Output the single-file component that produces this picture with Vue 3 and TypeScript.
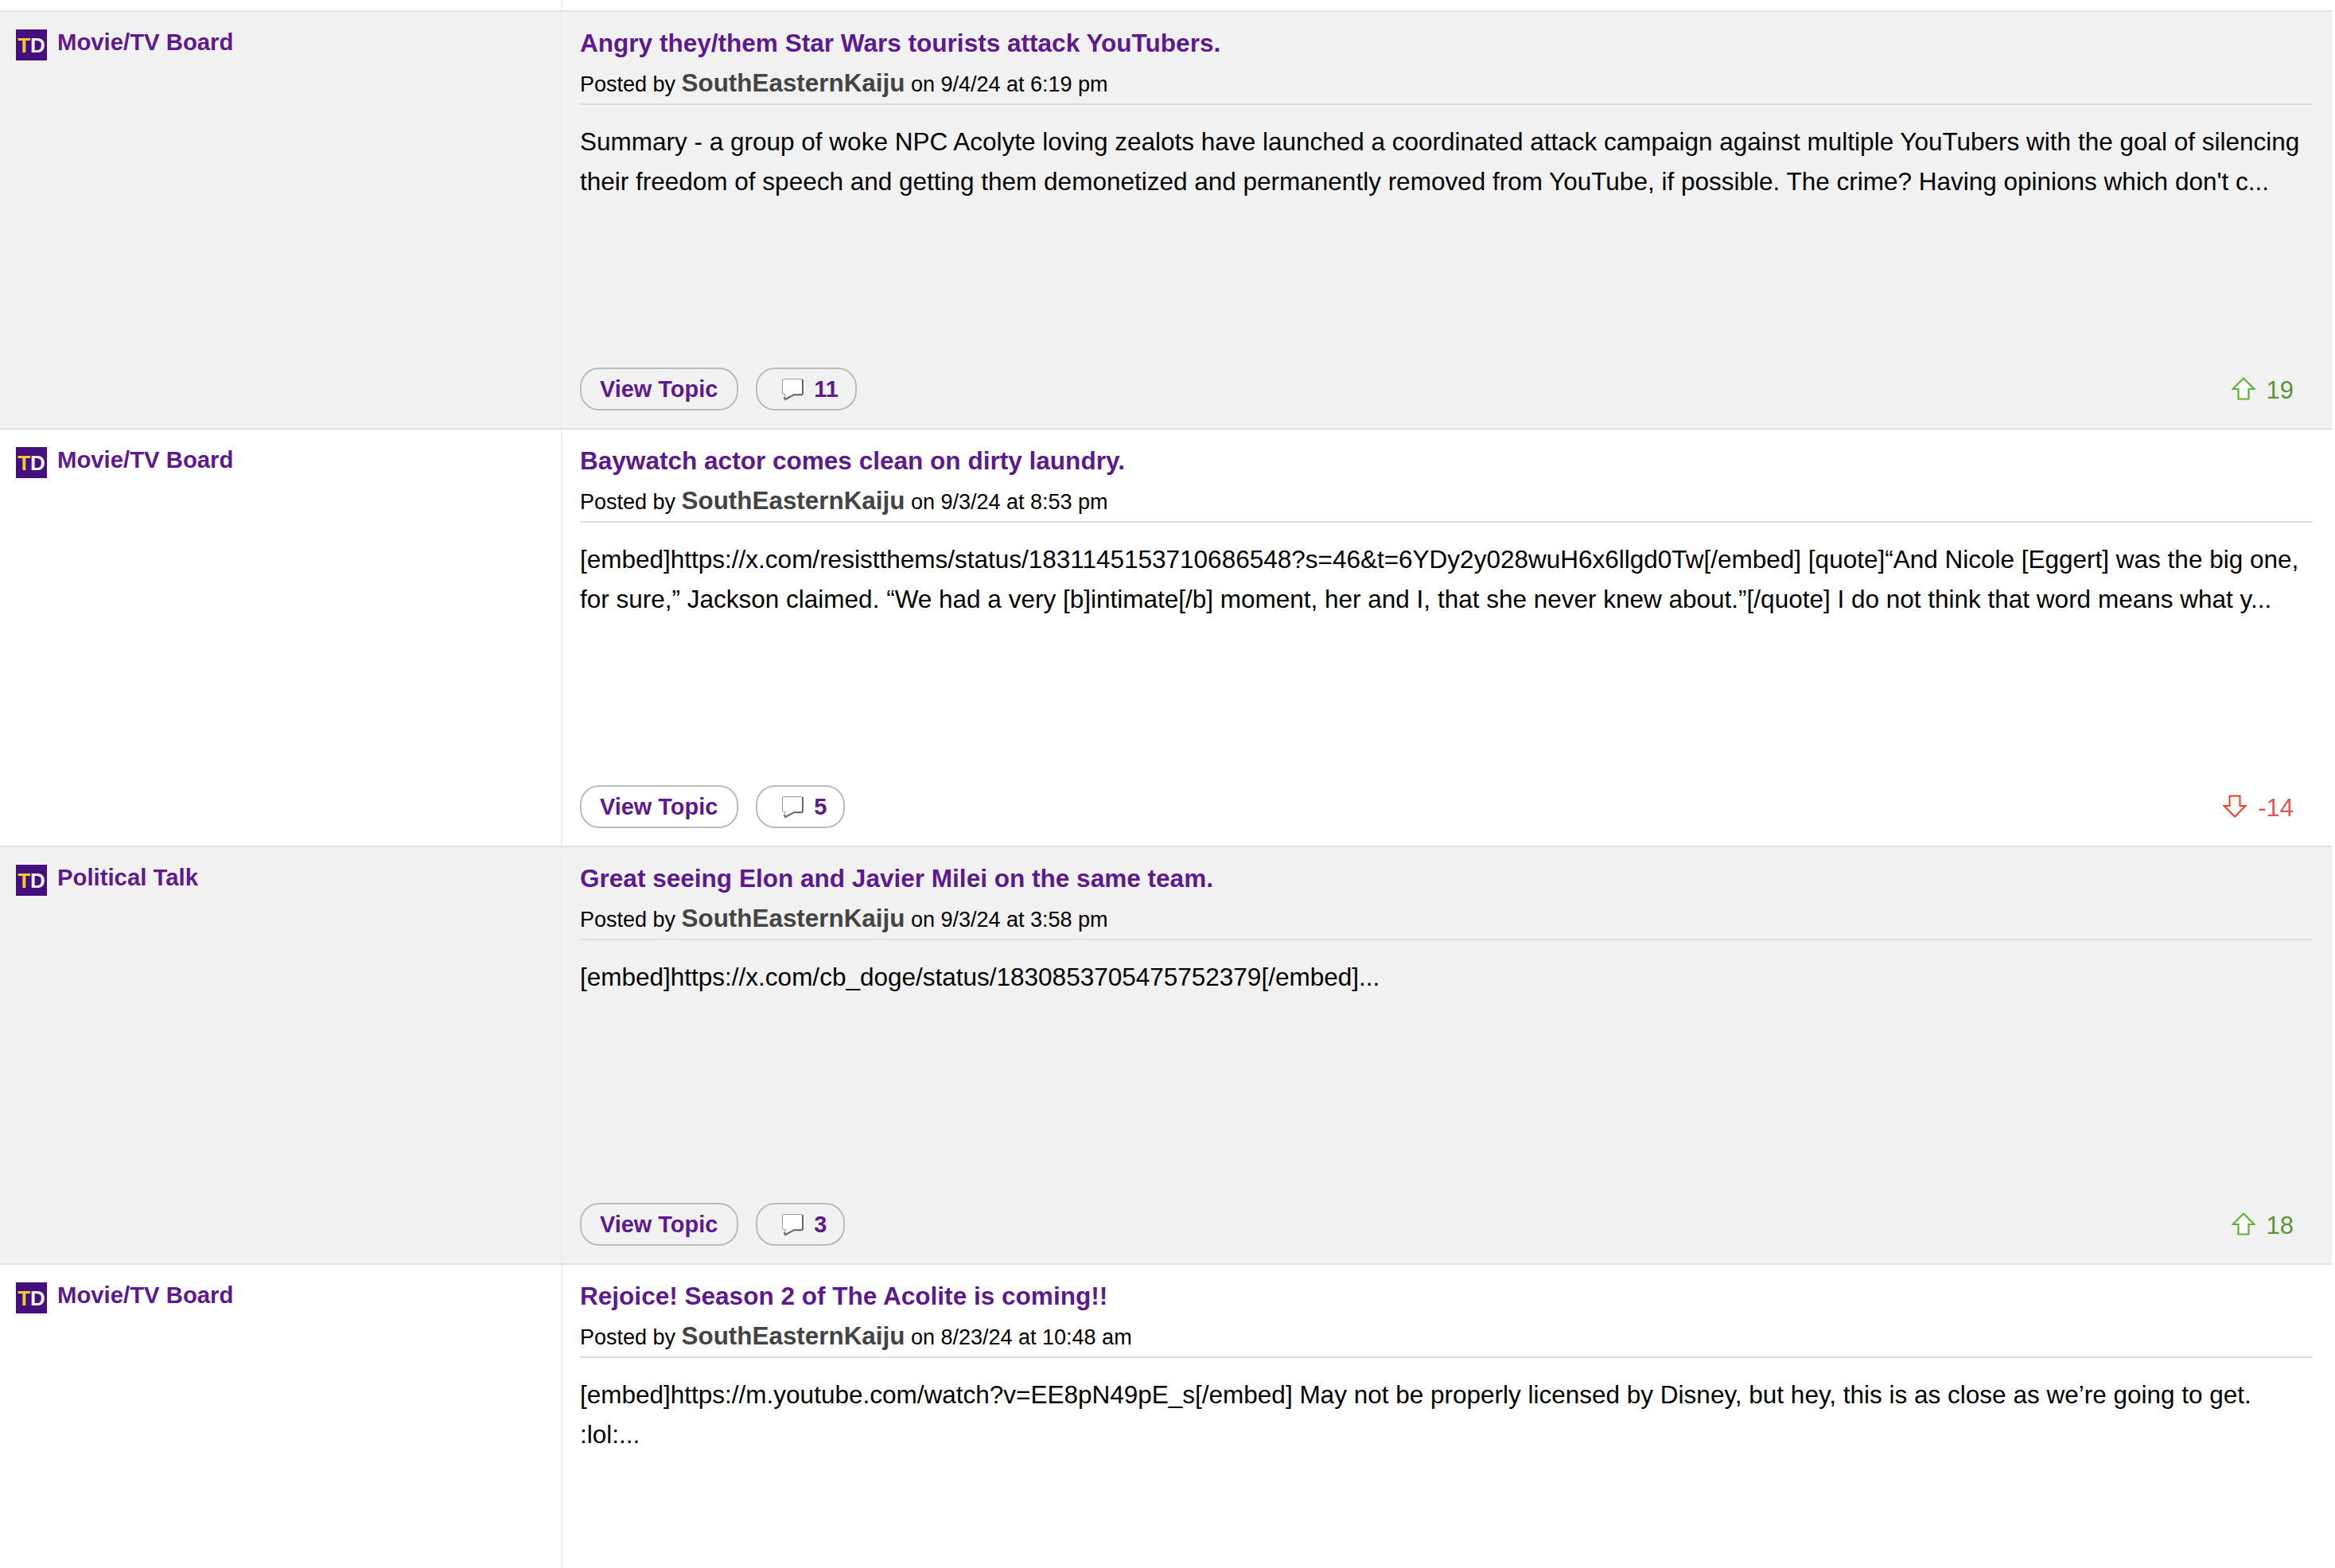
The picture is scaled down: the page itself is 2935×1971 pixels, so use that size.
<script setup lang="ts">
interface Post {
  board: string
  title: string
  date: string
  lines: string[]
  comments: number
  votes: number
}

const posts: Post[] = [
  {
    board: 'Movie/TV Board',
    title: 'Angry they/them Star Wars tourists attack YouTubers.',
    date: '9/4/24 at 6:19 pm',
    lines: [
      'Summary - a group of woke NPC Acolyte loving zealots have launched a coordinated attack campaign against multiple YouTubers with the goal of silencing',
      "their freedom of speech and getting them demonetized and permanently removed from YouTube, if possible. The crime? Having opinions which don't c...",
    ],
    comments: 11,
    votes: 19,
  },
  {
    board: 'Movie/TV Board',
    title: 'Baywatch actor comes clean on dirty laundry.',
    date: '9/3/24 at 8:53 pm',
    lines: [
      '[embed]https://x.com/resistthems/status/1831145153710686548?s=46&t=6YDy2y028wuH6x6llgd0Tw[/embed] [quote]“And Nicole [Eggert] was the big one,',
      'for sure,” Jackson claimed. “We had a very [b]intimate[/b] moment, her and I, that she never knew about.”[/quote] I do not think that word means what y...',
    ],
    comments: 5,
    votes: -14,
  },
  {
    board: 'Political Talk',
    title: 'Great seeing Elon and Javier Milei on the same team.',
    date: '9/3/24 at 3:58 pm',
    lines: ['[embed]https://x.com/cb_doge/status/1830853705475752379[/embed]...'],
    comments: 3,
    votes: 18,
  },
  {
    board: 'Movie/TV Board',
    title: 'Rejoice! Season 2 of The Acolite is coming!!',
    date: '8/23/24 at 10:48 am',
    lines: [
      '[embed]https://m.youtube.com/watch?v=EE8pN49pE_s[/embed] May not be properly licensed by Disney, but hey, this is as close as we’re going to get.',
      ':lol:...',
    ],
    comments: 0,
    votes: 0,
  },
]
</script>

<template>
  <div class="list">
    <div class="lead"><div class="lead-left"></div></div>
    <article v-for="(post, i) in posts" :key="post.title" class="row" :class="{ shaded: i % 2 === 0 }">
      <div class="side">
        <span class="logo"><span class="t">T</span><span class="d">D</span></span>
        <a class="board">{{ post.board }}</a>
      </div>
      <div class="main">
        <a class="title">{{ post.title }}</a>
        <div class="meta">Posted by <b class="user">SouthEasternKaiju</b> on {{ post.date }}</div>
        <div class="body">
          <div v-for="line in post.lines" :key="line" class="line">{{ line }}</div>
        </div>
        <div v-if="post.comments" class="foot">
          <a class="pill view">View Topic</a>
          <a class="pill count">
            <svg class="bubble" width="30" height="30" viewBox="0 0 30 30">
              <path d="M3.500 4 Q3.500 2.500 5 2.500 H27 Q28.500 2.500 28.500 4 V20 Q28.500 21.500 27 21.500 H18 L7 27 V21.500 H5 Q3.500 21.500 3.500 20 Z" fill="#fff" stroke="#999" stroke-width="1" />
              <path d="M29 3 V20.500 Q29 22.300 27 22.300 H18.300 L7 28.300 L5.500 25" fill="none" stroke="#444" stroke-width="1.800" stroke-opacity="0.8" />
            </svg>
            <span>{{ post.comments }}</span>
          </a>
          <div class="votes" :class="post.votes < 0 ? 'down' : 'up'">
            <svg v-if="post.votes >= 0" class="arrow" width="30" height="29" viewBox="0 0 30 29">
              <path d="M15 1.500 L28.500 15 H21.500 V27.500 H8.500 V15 H1.500 Z" fill="#fff" stroke="#5cb23c" stroke-width="2.200" />
            </svg>
            <svg v-else class="arrow" width="30" height="29" viewBox="0 0 30 29">
              <path d="M15 27.500 L1.500 14 H8.500 V1.500 H21.500 V14 H28.500 Z" fill="#fff" stroke="#ef3e1e" stroke-width="2" />
            </svg>
            <span class="num">{{ post.votes }}</span>
          </div>
        </div>
      </div>
    </article>
  </div>
</template>

<style>
html, body { margin: 0; background: #fff; overflow: hidden; }
</style>

<style scoped>
.list {
  width: 2931px;
  font-family: "Liberation Sans", Arial, sans-serif;
  color: #000;
}
.lead { height: 13px; }
.lead-left { width: 705px; height: 100%; border-right: 2px solid #eee; }
.row {
  display: flex;
  height: 525px;
  box-sizing: border-box;
  border-top: 2px solid #e0e0e0;
  background: #fff;
}
.row.shaded { background: #f1f1f1; }
.side {
  flex: none;
  box-sizing: border-box;
  padding: 22px 0 0 20px;
  border-right: 2px solid #eee;
  width: 707px;
  display: flex;
  align-items: flex-start;
  gap: 13px;
}
.logo {
  width: 39px;
  height: 39px;
  background: #45107d;
  display: flex;
  align-items: center;
  justify-content: center;
  font: bold 26px/39px "Liberation Sans", sans-serif;
  padding-top: 2px;
  box-sizing: border-box;
}
.t { color: #f2cb2c; }
.d { color: #eee; }
.board {
  margin-top: -2px;
  font-size: 29.300px;
  line-height: 36px;
  font-weight: bold;
  color: #5c1a8e;
}
.main {
  flex: 1;
  min-width: 0;
  box-sizing: border-box;
  padding: 19px 24px 22px 22px;
  display: flex;
  flex-direction: column;
}
.title {
  font-size: 31.550px;
  line-height: 40px;
  font-weight: bold;
  color: #5c1a8e;
}
.meta {
  margin-top: 10px;
  font-size: 27px;
  line-height: 42px;
  padding-bottom: 3px;
  border-bottom: 2px solid #ddd;
}
.user {
  font-size: 31.400px;
  color: #444;
}
.body {
  margin-top: 21px;
  font-size: 31.500px;
  line-height: 50px;
  flex: 1;
  white-space: nowrap;
}
.foot {
  display: flex;
  align-items: center;
  gap: 22px;
}
.pill {
  height: 54px;
  box-sizing: border-box;
  border: 2px solid #bbb;
  border-radius: 24px;
  display: flex;
  align-items: center;
  font-size: 28.900px;
  font-weight: bold;
  color: #5c1a8e;
}
.view { padding: 0 24px 0 23px; }
.count { padding: 0 21px 0 28px; gap: 13px; }
.bubble { display: block; }
.votes {
  margin-left: auto;
  margin-right: 24px;
  display: flex;
  align-items: center;
  gap: 14px;
  font-size: 31px;
}
.arrow { margin-top: -1px; }
.num { margin-top: 3px; }
.up { color: #5a9438; }
.down { color: #dc5a5a; }
</style>
